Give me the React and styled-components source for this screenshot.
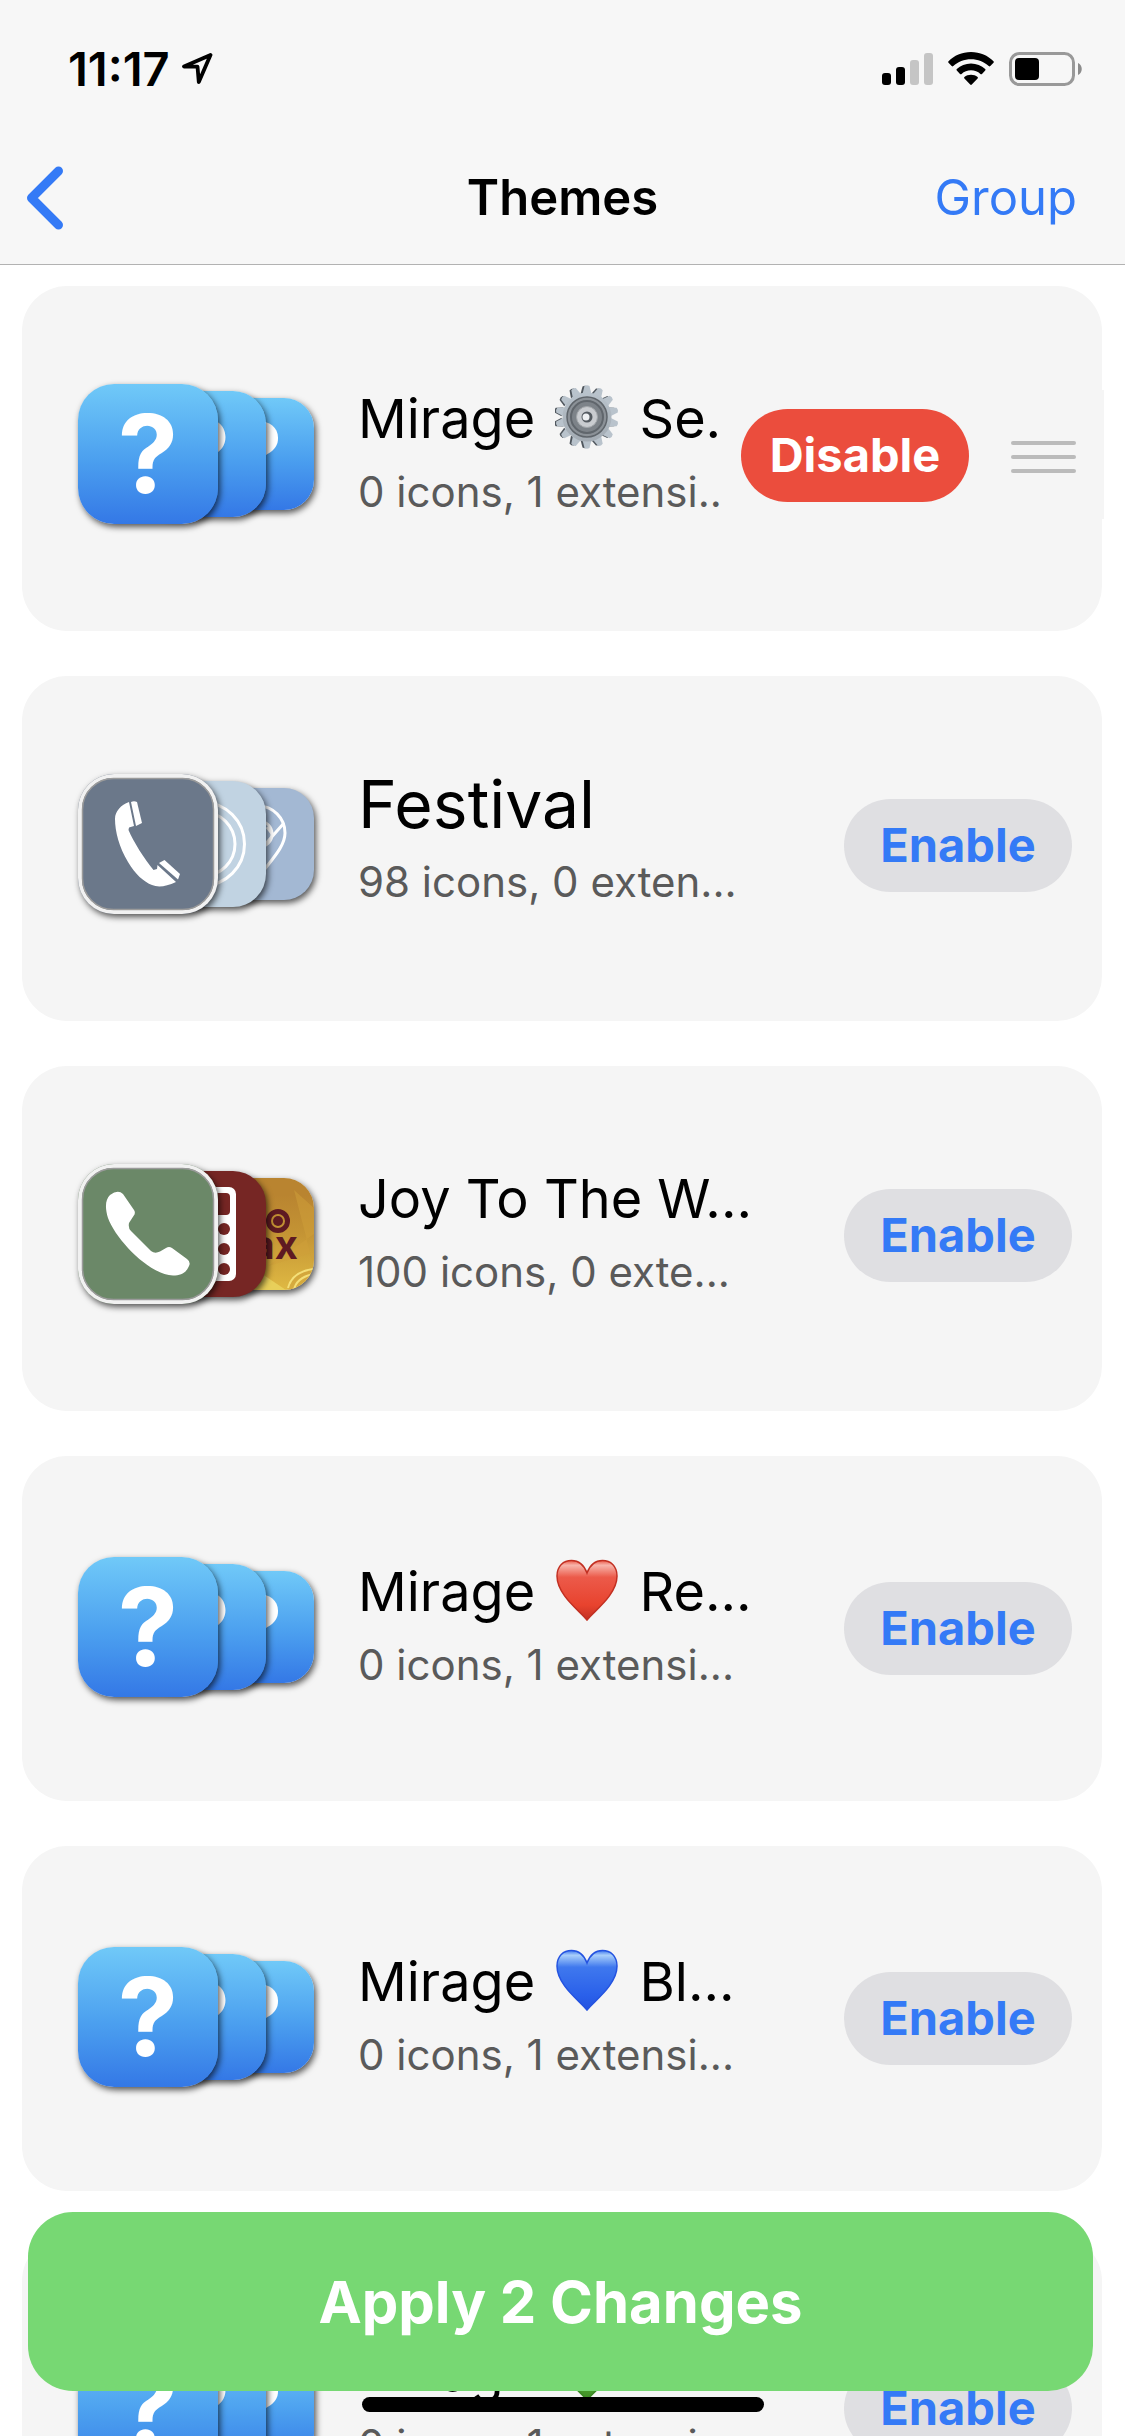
import React from "react";
import styled, { createGlobalStyle } from "styled-components";

const GlobalStyle = createGlobalStyle`
  * {
    box-sizing: border-box;
  }

  body {
    margin: 0;
    background: #fff;
    font-family: Inter, "Liberation Sans", sans-serif;
  }

  button {
    margin: 0;
    border: 0;
    background: none;
    font-family: inherit;
    cursor: pointer;
  }
`;

const Screen = styled.div`
  display: flex;
  flex-direction: column;
  height: 100vh;
  overflow: hidden;
`;

const Header = styled.header`
  flex: none;
  background: #f7f7f7;
  border-bottom: 1px solid #b2b2b2;
`;

const StatusBar = styled.div`
  display: flex;
  align-items: center;
  justify-content: space-between;
  height: 132px;
  padding: 6px 42px 0 68px;
`;

const StatusGroup = styled.div`
  display: flex;
  align-items: center;
  gap: ${({ $gap }) => $gap}px;
`;

const Time = styled.time`
  font-size: 47px;
  font-weight: 600;
  line-height: 60px;
`;

const NavBar = styled.nav`
  display: grid;
  grid-template-columns: 1fr auto 1fr;
  align-items: center;
  height: 132px;
  padding: 0 48px 0 24px;
`;

const BackButton = styled.button`
  display: flex;
  justify-self: start;
  padding: 0;
`;

const NavTitle = styled.h1`
  margin: 0;
  padding-left: 24px;
  font-size: 49px;
  font-weight: 600;
  line-height: 60px;
`;

const GroupButton = styled.button`
  justify-self: end;
  padding: 0;
  color: #347af6;
  font-size: 49px;
  line-height: 60px;
`;

const List = styled.ul`
  display: flex;
  flex: 1;
  flex-direction: column;
  gap: 45px;
  min-height: 0;
  margin: 0;
  padding: 21px 23px 0 22px;
  overflow: hidden;
  list-style: none;
`;

const Card = styled.li`
  display: flex;
  flex: none;
  align-items: center;
  min-height: 345px;
  padding: 0 30px ${({ $low }) => ($low ? 3 : 9)}px 56px;
  border-radius: 45px;
  background: #f5f5f5;
`;

const Stack = styled.div`
  display: flex;
  flex: none;
  align-items: center;
  margin-right: 44px;
`;

const Tile = styled.div`
  position: relative;
  z-index: ${({ $level }) => 3 - $level};
  display: flex;
  align-items: center;
  justify-content: center;
  width: ${({ $level }) => 140 - $level * 14}px;
  height: ${({ $level }) => 140 - $level * 14}px;
  margin-left: ${({ $level }) => [0, -78, -64][$level]}px;
  border-radius: ${({ $level }) => 36 - $level * 3}px;
  background: ${({ $fill }) => $fill};
  box-shadow: 2px 3px 6px rgba(0, 0, 0, 0.65);
  color: #fff;
  font-size: ${({ $level }) => 108 - $level * 11}px;
  font-weight: 700;
  line-height: 1;
  overflow: hidden;

  svg {
    display: block;
    width: 100%;
    height: 100%;
  }
`;

const Info = styled.div`
  flex: 1;
  min-width: 0;
  padding: 6px 0 11px;
  overflow: hidden;
  white-space: nowrap;
`;

const Name = styled.h2`
  height: 80px;
  margin: 0;
  font-size: ${({ $large }) => ($large ? 66 : 54)}px;
  font-weight: 400;
  line-height: ${({ $large }) => ($large ? 70 : 80)}px;
`;

const Detail = styled.p`
  margin: 0;
  color: #5a5a5a;
  font-size: 42px;
  line-height: 66px;
`;

const Emoji = styled.svg`
  width: 64px;
  height: 64px;
  margin: 0 5px;
  vertical-align: -11px;
`;

const ToggleButton = styled.button`
  flex: none;
  width: 228px;
  height: 93px;
  margin: 2px 0 0 12px;
  padding: 0;
  border-radius: 47px;
  background: ${({ $active }) => ($active ? "#eb4d3d" : "#dfdfe2")};
  color: ${({ $active }) => ($active ? "#fff" : "#347af6")};
  font-size: 47px;
  font-weight: 700;
  line-height: 60px;
`;

const DragHandle = styled.button`
  display: flex;
  flex: none;
  flex-direction: column;
  align-items: flex-end;
  justify-content: center;
  gap: 10px;
  width: 135px;
  height: 129px;
  margin-right: -32px;
  padding: 6px 28px 0 0;
  background: #f5f5f5;
`;

const Grip = styled.span`
  width: 65px;
  height: 4px;
  border-radius: 2px;
  background: #bbb;
`;

const BottomBar = styled.div`
  position: fixed;
  right: 0;
  bottom: 24px;
  left: 0;
  z-index: 10;
  display: flex;
  flex-direction: column;
  align-items: center;
  gap: 6px;
`;

const ApplyButton = styled.button`
  align-self: stretch;
  height: 179px;
  margin: 0 32px 0 28px;
  padding: 0;
  border-radius: 45px;
  background: #77d873;
  color: #fff;
  font-size: 58px;
  font-weight: 700;
  line-height: 80px;
`;

const HomeIndicator = styled.div`
  width: 402px;
  height: 15px;
  border-radius: 8px;
  background: #000;
`;

const LocationIcon = () => (
  <svg width="32" height="32" viewBox="0 0 32 32" aria-hidden="true">
    <path
      d="M28.500 2 2 13.600H15.500L16.800 29Z"
      fill="none"
      stroke="#000"
      strokeWidth="3.8"
      strokeLinejoin="round"
    />
  </svg>
);

const SignalIcon = () => (
  <svg width="51" height="34" viewBox="0 0 51 34" aria-hidden="true">
    <rect x="0" y="21" width="9" height="12" rx="3" />
    <rect x="14" y="15" width="9" height="18" rx="3" />
    <rect x="28" y="8" width="9" height="25" rx="3" fill="#c5c5c5" />
    <rect x="42" y="1" width="9" height="32" rx="3" fill="#c5c5c5" />
  </svg>
);

const WifiIcon = () => (
  <svg width="46" height="34" viewBox="0 0 46 34" aria-hidden="true">
    <path d="M23 0C14 0 6 3.500 .5 9.300C0 9.800 0 10.300.5 10.800L3.700 14.100C4.200 14.600 4.800 14.600 5.300 14.100C10 9.700 16.200 7.200 23 7.200S36 9.700 40.700 14.100C41.200 14.600 41.800 14.600 42.300 14.100L45.500 10.800C46 10.300 46 9.800 45.500 9.300C40 3.500 32 0 23 0Z" />
    <path d="M23 11.400C17.500 11.400 12.500 13.500 8.800 17C8.300 17.500 8.300 18 8.800 18.500L12 21.900C12.500 22.400 13.100 22.400 13.600 21.900C16.100 19.700 19.400 18.300 23 18.300S29.900 19.700 32.400 21.900C32.900 22.400 33.500 22.400 34 21.900L37.200 18.500C37.700 18 37.700 17.500 37.200 17C33.500 13.500 28.500 11.400 23 11.400Z" />
    <path d="M23 22.800C20.500 22.800 18.200 23.600 16.400 25C15.900 25.500 15.900 26 16.400 26.500L22.200 32.600C22.700 33.100 23.300 33.100 23.800 32.600L29.600 26.500C30.100 26 30.100 25.500 29.600 25C27.800 23.600 25.500 22.800 23 22.800Z" />
  </svg>
);

const BatteryIcon = () => (
  <svg width="74" height="34" viewBox="0 0 74 34" aria-hidden="true">
    <rect
      x="1.500"
      y="1.500"
      width="63"
      height="31"
      rx="9"
      fill="none"
      stroke="#999"
      strokeWidth="3"
    />
    <rect x="6" y="6" width="24" height="22" rx="4" />
    <path d="M69 11C74 13 74 21 69 23Z" fill="#8c8c8c" />
  </svg>
);

const BackIcon = () => (
  <svg width="42" height="66" viewBox="0 0 42 66" aria-hidden="true">
    <path
      d="M34.500 6 7.500 33 34.500 60"
      fill="none"
      stroke="#347af6"
      strokeWidth="9"
      strokeLinecap="round"
      strokeLinejoin="round"
    />
  </svg>
);

const teeth = Array.from({ length: 14 }, (_, i) => (i * 360) / 14);

const Gear = () => (
  <Emoji viewBox="0 0 64 64" role="img" aria-label="gear">
    <defs>
      <linearGradient id="gear-rim" x1="0" y1="0" x2="0" y2="1">
        <stop offset="0" stopColor="#b9c3cc" />
        <stop offset="1" stopColor="#a3abb3" />
      </linearGradient>
    </defs>
    <g transform="translate(-2 0)" fill="#4f565d">
      {teeth.map((deg) => (
        <path
          key={deg}
          d="M27.500 9 29.500 1.500Q32 0 34.500 1.500L36.500 9Z"
          transform={`rotate(${deg} 32 32)`}
        />
      ))}
    </g>
    <g fill="#b9c3cc">
      {teeth.map((deg) => (
        <path
          key={deg}
          d="M27.500 9 29.500 1Q32 -.5 34.500 1L36.500 9Z"
          transform={`rotate(${deg} 32 32)`}
        />
      ))}
    </g>
    <circle cx="32" cy="32" r="24.500" fill="url(#gear-rim)" />
    <circle cx="32" cy="32" r="20" fill="#8b9197" stroke="#5f656b" strokeWidth="1.500" />
    <circle cx="32" cy="32" r="16" fill="#7d8389" stroke="#60666c" strokeWidth="2" />
    <circle cx="32" cy="32" r="10.500" fill="#c9ccd0" stroke="#a2a6aa" />
    <circle cx="32" cy="32" r="5.500" fill="#555b61" />
    <circle cx="31" cy="32" r="3.500" fill="#eef0f2" />
  </Emoji>
);

const heartColors = {
  red: ["#f7b5ab", "#ec5a4a", "#e8432e", "#c23022"],
  blue: ["#a9cffa", "#3f78ee", "#2a60ea", "#2453e0"],
  green: ["#b9e3a6", "#62b840", "#4fa62f", "#3c8a25"],
};

const Heart = ({ color }) => {
  const [shine, light, base, edge] = heartColors[color];
  return (
    <Emoji viewBox="0 0 64 64" role="img" aria-label={`${color} heart`}>
      <defs>
        <linearGradient id={`heart-${color}`} x1="0" y1="0" x2="0" y2="1">
          <stop offset="0" stopColor={light} />
          <stop offset="0.08" stopColor={shine} />
          <stop offset="0.28" stopColor={light} />
          <stop offset="0.75" stopColor={base} />
          <stop offset="1" stopColor={edge} />
        </linearGradient>
      </defs>
      <path
        d="M32 62C25 53 2 37 2 18C2 8 8.500 2.500 16.500 2.500C23.500 2.500 29 7 32 15C35 7 40.500 2.500 47.500 2.500C55.500 2.500 62 8 62 18C62 37 39 53 32 62Z"
        fill={`url(#heart-${color})`}
        stroke={edge}
        strokeWidth="1.500"
      />
    </Emoji>
  );
};

const questionFill = "linear-gradient(#70c9f8, #4b9fef 55%, #3478e6)";

const QuestionStack = () => (
  <Stack>
    {[0, 1, 2].map((level) => (
      <Tile key={level} $level={level} $fill={questionFill}>
        ?
      </Tile>
    ))}
  </Stack>
);

const TileFrame = () => (
  <>
    <rect x="1.500" y="1.500" width="137" height="137" rx="34" fill="none" stroke="#f1f1f1" strokeWidth="5" />
    <rect x="4.500" y="4.500" width="131" height="131" rx="31" fill="none" stroke="#9a9a9a" strokeWidth="1.500" />
  </>
);

const FestivalStack = () => (
  <Stack>
    <Tile $level={0} $fill="#6b788a">
      <svg viewBox="0 0 140 140">
        <TileFrame />
        <g fill="#fff">
          <path d="M51 28C43 31 37 37 37 45C37 57 41 73 50 88C57 100 66 108 74 111Q83 115 98 108L79.500 91 79 95 75.500 96C67 86 55 67 50.500 56L51 53.500 56 52Z" />
          <path d="M53 28Q56 26.500 59 28L64 49 58 52Z" />
          <path d="M81 89 86.500 86 102 100 100 105.500Z" />
        </g>
      </svg>
    </Tile>
    <Tile $level={1} $fill="#c1d3e2">
      <svg viewBox="0 0 126 126" fill="none" stroke="#fff" strokeWidth="3">
        <circle cx="63" cy="63" r="41.500" />
        <circle cx="63" cy="63" r="32" />
      </svg>
    </Tile>
    <Tile $level={2} $fill="#a3b8d3">
      <svg viewBox="0 0 112 112" fill="none" stroke="#fff" strokeWidth="3">
        <path d="M56 90C50 78 29 62 29 45A27 27 0 0 1 83 45C83 59 69 72 56 90Z" />
        <circle cx="57" cy="46" r="13" />
        <path d="M82 35 60 60M65 39 72 48" />
      </svg>
    </Tile>
  </Stack>
);

const JoyStack = () => (
  <Stack>
    <Tile $level={0} $fill="#6b8868">
      <svg viewBox="0 0 140 140">
        <TileFrame />
        <path
          d="M32 31Q40 25 45 30L56 46Q58 49 55.500 52L51 59Q50 64 53 67L73 87Q77 90 82 87.500L88 84Q91 82 94 84L109 95Q113 98 111 102C108 109 103 111.500 95 111.500C72 111 38 76 30 54C27 44 27 36 32 31Z"
          fill="#fff"
        />
      </svg>
    </Tile>
    <Tile $level={1} $fill="#762624">
      <svg viewBox="0 0 126 126">
        <rect x="30" y="16" width="66" height="94" rx="7" fill="#fff" />
        <g fill="#762624">
          <rect x="36" y="22" width="54" height="22" rx="4" />
          {[58, 78, 98].map((cy) => (
            <circle key={cy} cx="84" cy={cy} r="6" />
          ))}
        </g>
      </svg>
    </Tile>
    <Tile $level={2} $fill="linear-gradient(#b98430 15%, #c49434 50%, #dfb943)">
      <svg viewBox="0 0 112 112">
        <path d="M0 112V90L60 96 84 112Z" fill="#e8cf5a" />
        <path d="M92 12 112 30V56L66 88 112 74V112H86Q88 94 112 90" fill="#cfa03a" opacity=".5" />
        <path d="M86 110Q90 94 111 91M92 112Q94 100 111 96" fill="none" stroke="#f4df78" strokeWidth="2" />
        <g fill="none" stroke="#5e1a22">
          <circle cx="50" cy="43" r="9" strokeWidth="6" />
          <circle cx="76" cy="43" r="9.500" strokeWidth="5" />
        </g>
        <circle cx="76" cy="43" r="5" fill="#5e1a22" />
        <text x="96" y="81" textAnchor="end" fontSize="40" fontWeight="700" fill="#5e1a22">
          max
        </text>
      </svg>
    </Tile>
  </Stack>
);

const themes = [
  {
    id: "settings",
    name: (
      <>
        Mirage <Gear /> Se.
      </>
    ),
    detail: "0 icons, 1 extensi..",
    icons: <QuestionStack />,
    enabled: true,
  },
  {
    id: "festival",
    name: "Festival",
    detail: "98 icons, 0 exten...",
    icons: <FestivalStack />,
    large: true,
  },
  {
    id: "joy",
    name: "Joy To The W...",
    detail: "100 icons, 0 exte...",
    icons: <JoyStack />,
  },
  {
    id: "red",
    name: (
      <>
        Mirage <Heart color="red" /> Re...
      </>
    ),
    detail: "0 icons, 1 extensi...",
    icons: <QuestionStack />,
    low: true,
  },
  {
    id: "blue",
    name: (
      <>
        Mirage <Heart color="blue" /> Bl...
      </>
    ),
    detail: "0 icons, 1 extensi...",
    icons: <QuestionStack />,
    low: true,
  },
  {
    id: "green",
    name: (
      <>
        Mirage <Heart color="green" /> Gr...
      </>
    ),
    detail: "0 icons, 1 extensi...",
    icons: <QuestionStack />,
    low: true,
  },
];

const ThemeCard = ({ name, detail, icons, enabled, large, low }) => (
  <Card $low={low}>
    {icons}
    <Info>
      <Name $large={large}>{name}</Name>
      <Detail>{detail}</Detail>
    </Info>
    <ToggleButton type="button" $active={enabled}>
      {enabled ? "Disable" : "Enable"}
    </ToggleButton>
    {enabled && (
      <DragHandle type="button" aria-label="Reorder">
        <Grip />
        <Grip />
        <Grip />
      </DragHandle>
    )}
  </Card>
);

const App = () => (
  <Screen>
    <GlobalStyle />
    <Header>
      <StatusBar>
        <StatusGroup $gap={12}>
          <Time>11:17</Time>
          <LocationIcon />
        </StatusGroup>
        <StatusGroup $gap={15}>
          <SignalIcon />
          <WifiIcon />
          <BatteryIcon />
        </StatusGroup>
      </StatusBar>
      <NavBar>
        <BackButton type="button" aria-label="Back">
          <BackIcon />
        </BackButton>
        <NavTitle>Themes</NavTitle>
        <GroupButton type="button">Group</GroupButton>
      </NavBar>
    </Header>
    <List>
      {themes.map(({ id, ...theme }) => (
        <ThemeCard key={id} {...theme} />
      ))}
    </List>
    <BottomBar>
      <ApplyButton type="button">Apply 2 Changes</ApplyButton>
      <HomeIndicator />
    </BottomBar>
  </Screen>
);

export default App;
